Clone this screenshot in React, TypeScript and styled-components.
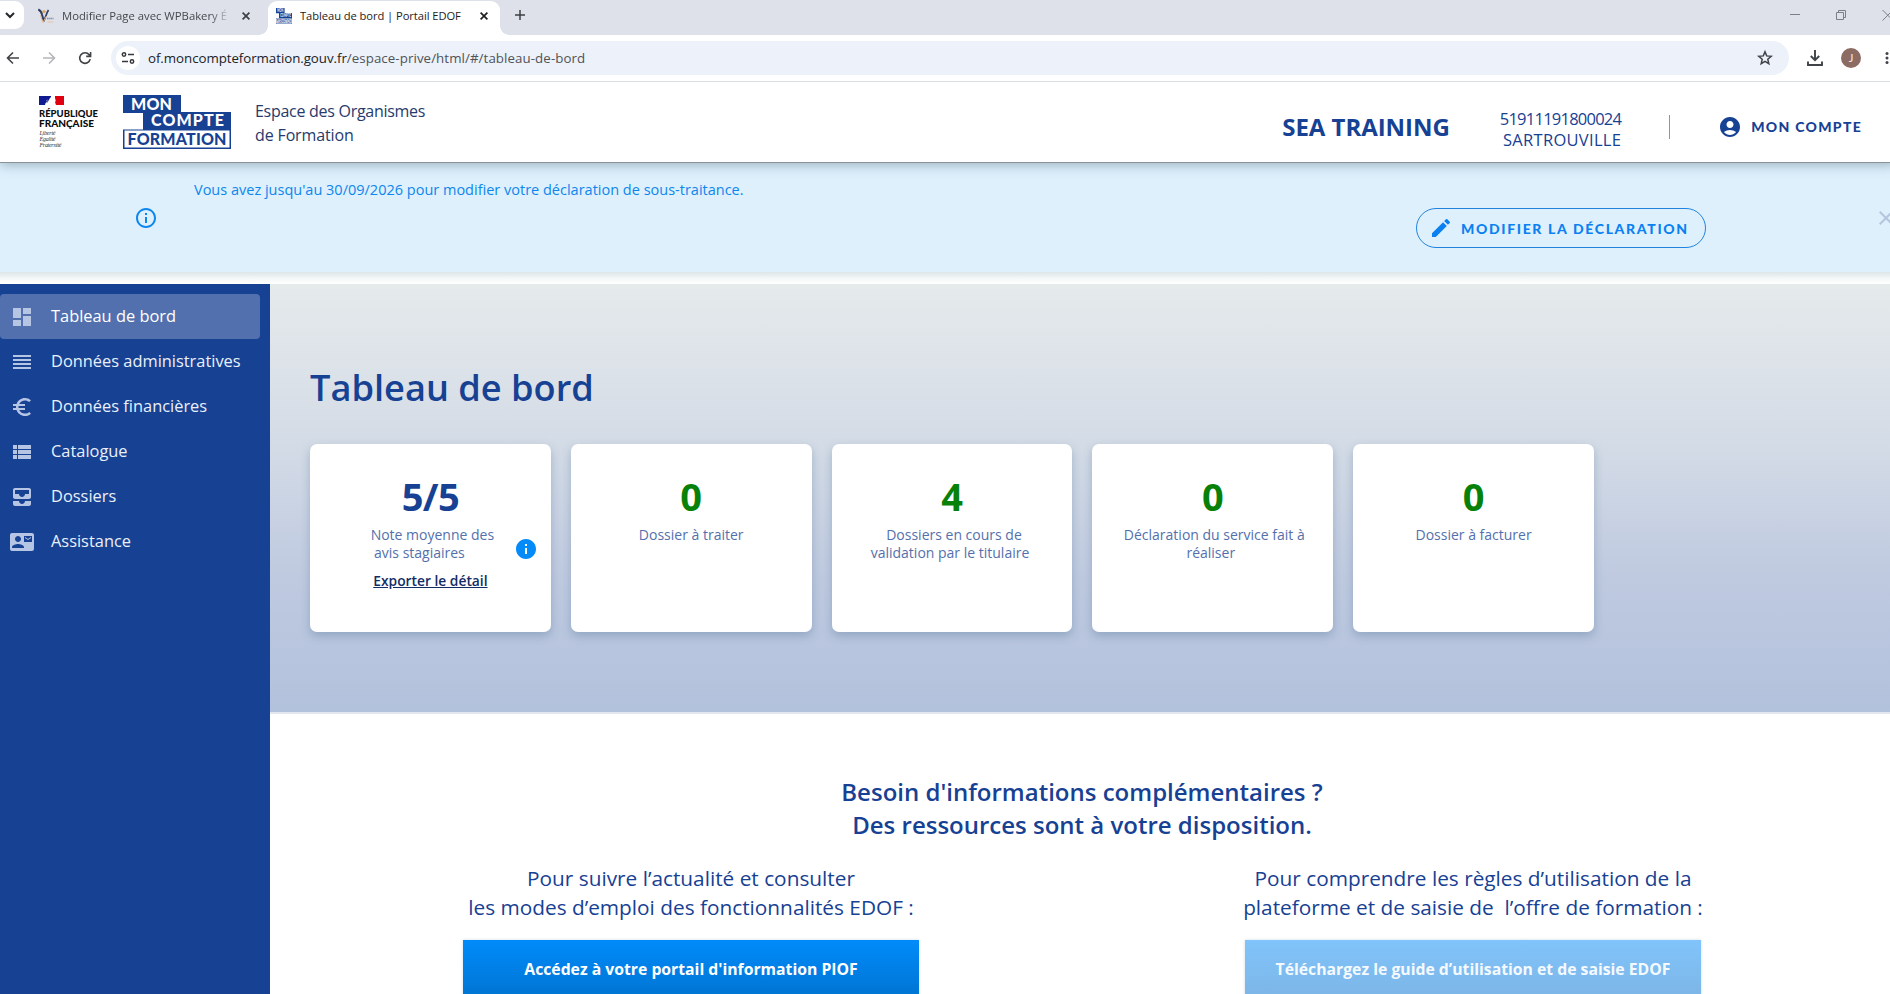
import React from "react";
import styled, { createGlobalStyle } from "styled-components";
import {
  MdAccountCircle,
  MdAllInbox,
  MdClose,
  MdContactMail,
  MdDashboard,
  MdEdit,
  MdEuroSymbol,
  MdInfo,
  MdInfoOutline,
  MdReorder,
  MdViewList,
} from "react-icons/md";

const navy = "#174193";
const azure = "#0d86ee";

const GlobalStyle = createGlobalStyle`
  html, body { margin: 0; padding: 0; background: #fff; overflow: hidden; }
  *, *::before, *::after { box-sizing: border-box; }
`;

const Viewport = styled.div`
  width: 100vw;
  height: 100vh;
  overflow: hidden;
  font-family: "Open Sans", "Noto Sans", sans-serif;
  color: ${navy};
`;

const Page = styled.div`
  width: 1896px;
  height: 994px;
  display: flex;
  flex-direction: column;
  overflow: hidden;
`;

/* ---------- browser chrome ---------- */

const TabStrip = styled.div`
  height: 35px;
  flex: none;
  display: flex;
  background: #dee1e9;
`;

const TabSearch = styled.div`
  width: 24px;
  height: 28px;
  margin-top: 1px;
  padding-left: 4px;
  display: flex;
  align-items: center;
  background: #fff;
  border-radius: 0 9px 9px 0;
`;

const Tab = styled.div<{ $active?: boolean }>`
  position: relative;
  width: ${(p) => (p.$active ? 232 : 244)}px;
  height: ${(p) => (p.$active ? 34 : 30)}px;
  margin-top: 1px;
  padding: ${(p) => (p.$active ? "0 12px 5px 8px" : "0 18px 1px 14px")};
  display: flex;
  align-items: center;
  gap: 8px;
  background: ${(p) => (p.$active ? "#fff" : "transparent")};
  border-radius: 9px 9px 0 0;
  color: ${(p) => (p.$active ? "#1f2023" : "#45484d")};
  font-size: ${(p) => (p.$active ? 11.2 : 11.3)}px;
  letter-spacing: ${(p) => (p.$active ? "-0.07px" : "0")};
  white-space: nowrap;

  &::before,
  &::after {
    content: "";
    display: ${(p) => (p.$active ? "block" : "none")};
    position: absolute;
    bottom: 0;
    width: 9px;
    height: 9px;
  }
  &::before {
    left: -9px;
    background: radial-gradient(circle at 0 0, transparent 8.5px, #fff 9px);
  }
  &::after {
    right: -9px;
    background: radial-gradient(circle at 100% 0, transparent 8.5px, #fff 9px);
  }
`;

const TabTitle = styled.span<{ $fade?: boolean }>`
  width: 168px;
  overflow: hidden;
  ${(p) => p.$fade && "mask-image: linear-gradient(90deg, #000 88%, transparent 101%);"}
`;

const TabClose = styled.span`
  display: flex;
  margin-left: auto;
`;

const NewTab = styled.div`
  width: 40px;
  height: 29px;
  display: flex;
  align-items: center;
  justify-content: center;
`;

const WindowControls = styled.div`
  margin-left: auto;
  height: 30px;
  padding-right: 2px;
  display: flex;
  align-items: center;
  gap: 36px;
`;

const Toolbar = styled.div`
  height: 47px;
  flex: none;
  display: flex;
  align-items: center;
  border-bottom: 1px solid #dadde2;
  background: #fff;
`;

const NavButtons = styled.div`
  width: 111px;
  padding-left: 5px;
  display: flex;
  gap: 20px;
`;

const Omnibox = styled.div`
  width: 1678px;
  height: 34px;
  padding: 0 15px 0 5px;
  display: flex;
  align-items: center;
  border-radius: 17px;
  background: #ecf1fa;
  font-size: 13.3px;
  line-height: 20px;
  color: #505357;
  white-space: nowrap;
`;

const SiteInfo = styled.span`
  width: 24px;
  height: 24px;
  margin-right: 8px;
  display: flex;
  align-items: center;
  justify-content: center;
  border-radius: 50%;
  background: #fff;
`;

const Host = styled.span`
  color: #202226;
  letter-spacing: -0.05px;
`;

const UrlPath = styled.span`
  letter-spacing: 0.08px;
`;

const StarSlot = styled.span`
  display: flex;
  margin-left: auto;
`;

const ToolbarActions = styled.div`
  flex: 1;
  padding-left: 17px;
  display: flex;
  align-items: center;
`;

const Avatar = styled.div`
  width: 20px;
  height: 20px;
  margin: 0 24px 0 17px;
  border-radius: 50%;
  background: #8c6c62;
  color: #f3e9e6;
  font-family: Lato, sans-serif;
  font-size: 11px;
  line-height: 20px;
  text-align: center;
`;

/* ---------- site header ---------- */

const Header = styled.header`
  position: relative;
  z-index: 1;
  height: 81px;
  flex: none;
  padding: 0 34px 0 38px;
  display: flex;
  align-items: center;
  background: #fff;
  border-bottom: 1px solid #8a9299;
  box-shadow: 0 1px 12px rgba(40, 70, 90, 0.42);
  clip-path: inset(0 0 -20px 0);
`;

const Logos = styled.div`
  display: flex;
  gap: 21px;
  margin-right: 24px;
`;

const SpaceName = styled.div`
  padding-top: 2px;
  font-size: 16px;
  line-height: 24px;
  color: #273a6c;
`;

const SpaceLine = styled.div<{ $spacing: number }>`
  letter-spacing: ${(p) => p.$spacing}px;
`;

const AccountArea = styled.div`
  margin: 9px 0 0 auto;
  display: flex;
  align-items: center;
`;

const Company = styled.div`
  font-size: 24px;
  font-weight: 700;
  letter-spacing: -0.05px;
`;

const Siret = styled.div`
  margin: 5px 48px 0 50px;
  font-size: 16.5px;
  line-height: 21px;
  text-align: right;
`;

const SiretNumber = styled.div`
  letter-spacing: -0.76px;
`;

const SiretCity = styled.div`
  letter-spacing: 0.3px;
`;

const Divider = styled.div`
  width: 1px;
  height: 24px;
  margin-right: 48px;
  background: #8b95ad;
`;

const AccountLink = styled.div`
  display: flex;
  align-items: center;
  gap: 9px;
  font-family: Lato, sans-serif;
  font-size: 14px;
  font-weight: 900;
  letter-spacing: 1.3px;
`;

/* ---------- notice ---------- */

const Notice = styled.div`
  height: 109px;
  flex: none;
  display: flex;
  background: #def0fc;
  color: ${azure};
`;

const NoticeIcon = styled.div`
  padding: 43px 36px 0 134px;
  line-height: 0;
`;

const NoticeText = styled.div`
  padding-top: 16px;
  font-size: 14.5px;
  line-height: 21px;
`;

const NoticeButton = styled.button`
  width: 290px;
  height: 40px;
  margin: 45px 168px 0 auto;
  padding: 0 0 0 12px;
  display: flex;
  align-items: center;
  gap: 8px;
  border: 1px solid #2183de;
  border-radius: 20px;
  background: transparent;
  color: #0a80f2;
  font-family: Lato, sans-serif;
  font-size: 14px;
  font-weight: 900;
  letter-spacing: 1.65px;
  white-space: nowrap;
`;

const NoticeClose = styled.div`
  width: 22px;
  padding-top: 43px;
  line-height: 0;
  color: #b4c6de;
`;

const NoticeShade = styled.div`
  height: 12px;
  flex: none;
  background: linear-gradient(#dde6e7, #f6f9f9 60%, #fff);
`;

/* ---------- body ---------- */

const Body = styled.div`
  flex: 1;
  min-height: 0;
  display: flex;
`;

const Sidebar = styled.nav`
  width: 270px;
  flex: none;
  padding: 10px 10px 0 0;
  background: ${navy};
`;

const NavItem = styled.a<{ $active?: boolean }>`
  height: 45px;
  padding-left: 10px;
  display: flex;
  align-items: center;
  gap: 17px;
  border-radius: 4px;
  background: ${(p) => (p.$active ? "#5270ae" : "transparent")};
  color: ${(p) => (p.$active ? "#fff" : "#eaf0fa")};
  font-size: 16.4px;

  svg {
    color: #b6c5e3;
  }
`;

const NavLabel = styled.span`
  padding-bottom: 3px;
`;

const Main = styled.main`
  flex: 1;
  min-width: 0;
`;

const Hero = styled.section`
  height: 430px;
  padding: 79px 40px 0;
  background: linear-gradient(#e5eaeb, #d3dbe6 38%, #bfcae0 68%, #b2c1dc);
  border-bottom: 2px solid #e3e8f0;
`;

const Title = styled.h1`
  margin: 0 0 33px;
  font-size: 36.2px;
  line-height: 48px;
  font-weight: 600;
`;

const Cards = styled.div`
  width: 1284px;
  display: grid;
  grid-template-columns: repeat(5, 1fr);
  gap: 20px;
`;

const Card = styled.article`
  position: relative;
  height: 188px;
  padding-top: 28px;
  border-radius: 7px;
  background: #fff;
  box-shadow: 0 4px 10px rgba(70, 105, 140, 0.34);
  text-align: center;
`;

const Figure = styled.div<{ $plain?: boolean }>`
  margin-bottom: 6px;
  font-size: 38px;
  line-height: 48px;
  font-weight: 700;
  letter-spacing: ${(p) => (p.$plain ? "-0.6px" : "0")};
  color: ${(p) => (p.$plain ? navy : "#078107")};
`;

const CardLine = styled.div<{ $shift?: number }>`
  padding-left: ${(p) => Math.max(0, p.$shift ?? 0)}px;
  padding-right: ${(p) => Math.max(0, -(p.$shift ?? 0))}px;
  font-size: 14px;
  line-height: 18px;
  color: #5470ac;
`;

const ExportLink = styled.a`
  display: block;
  margin-top: 10px;
  font-size: 13.8px;
  line-height: 18px;
  font-weight: 600;
  color: #122c66;
  text-decoration: underline;
  text-underline-offset: 1px;
`;

const InfoBadge = styled.span`
  position: absolute;
  right: 13px;
  top: 93px;
  line-height: 0;
  color: #048bf8;
`;

const Resources = styled.section`
  width: 1564px;
  margin: 61px 0 0 30px;
`;

const ResourcesTitle = styled.h2`
  margin: 0 0 23px;
  font-size: 24px;
  line-height: 33px;
  font-weight: 600;
  text-align: center;
`;

const Columns = styled.div`
  display: grid;
  grid-template-columns: 1fr 1fr;
`;

const Column = styled.div`
  display: flex;
  flex-direction: column;
  align-items: center;
  gap: 18px;
`;

const Pitch = styled.p`
  margin: 0;
  font-size: 20.8px;
  line-height: 29px;
  text-align: center;
  white-space: pre;
`;

const ResourceButton = styled.button<{ $muted?: boolean }>`
  width: 456px;
  height: 58px;
  padding: 0;
  border: 0;
  background: ${(p) =>
    p.$muted ? "linear-gradient(#80c4fb, #7db5e6)" : "linear-gradient(#018bfa, #0074d2)"};
  box-shadow: 0 0 3px rgba(0, 80, 130, 0.2);
  color: ${(p) => (p.$muted ? "#f4faff" : "#fff")};
  font-family: inherit;
  font-size: 15.75px;
  font-weight: 700;
`;

/* ---------- drawings ---------- */

const CloseGlyph = ({ color = "#3c4043" }: { color?: string }) => (
  <svg width="8" height="8" viewBox="0 0 8 8" stroke={color} strokeWidth="1.7">
    <path d="M0.6 0.6 7.4 7.4M7.4 0.6 0.6 7.4" />
  </svg>
);

const PersonFavicon = () => (
  <svg width="16" height="16" viewBox="0 0 16 16" fill="none">
    <path d="M0.3 1.5c2 1 3.2 2.5 3.7 5L5.5 12" stroke="#2f3f66" strokeWidth="2" />
    <path d="M10.5 2C8.5 5 8 8.5 5.5 13.5" stroke="#2f3f66" strokeWidth="1.7" />
    <circle cx="6" cy="3.6" r="1.7" fill="#e0a46a" />
    <path d="M2.5 7.5 5 14.5 8.5 8" stroke="#e3b286" strokeWidth="1" />
    <path d="M9 10.5h6.5" stroke="#8b93a8" strokeWidth="1.6" strokeDasharray="1.6 .4" />
    <path d="M9.5 14h6" stroke="#e6c3a4" strokeWidth="1" />
  </svg>
);

const BrandBlocks = ({ width, height }: { width: number; height: number }) => (
  <svg width={width} height={height} viewBox="0 0 108 54" preserveAspectRatio="none">
    <path d="M0 0h58v17h50v37H0V34.5h20V18H0z" fill={navy} />
    <path d="M1.5 35.5h105v17H1.5z" fill="#fff" />
    <g fontFamily="Lato, sans-serif" fontWeight="900" fontSize="16" fill="#fff">
      <text x="8" y="15" textLength="41">MON</text>
      <text x="28" y="31.2" textLength="73">COMPTE</text>
      <text x="4.5" y="49.8" textLength="99" fill={navy}>FORMATION</text>
    </g>
  </svg>
);

const RepublicLogo = () => (
  <svg width="64" height="54" viewBox="0 0 64 54">
    <path d="M1 1h12v9H1z" fill="#101a91" />
    <path d="M13 1h4v9h-4z" fill="#fff" />
    <path d="M17 1h9v9h-9z" fill="#e1000f" />
    <path d="M7 10c.5-3 2-3 3-3.5L12 3c1-1.5 3-2 4.5-1 .9 1.2.6 2.2 1.2 3.4.2 1-.9 1.1-.5 2.4L18 10z" fill="#fff" />
    <path d="M8 5.5l2-.5M8 7l2 .3" stroke="#7f86c9" strokeWidth=".8" />
    <g fontFamily="Lato, sans-serif" fontWeight="900" fontSize="9.8" fill="#0c0c0c">
      <text x="1" y="21.5" textLength="59" lengthAdjust="spacingAndGlyphs">RÉPUBLIQUE</text>
      <text x="1" y="31.5" textLength="55" lengthAdjust="spacingAndGlyphs">FRANÇAISE</text>
    </g>
    <g fontFamily="'Liberation Serif', serif" fontStyle="italic" fontSize="6" fill="#333">
      <text x="1.5" y="40" textLength="16">Liberté</text>
      <text x="1.5" y="46.2" textLength="16">Égalité</text>
      <text x="1.5" y="52.2" textLength="22">Fraternité</text>
    </g>
  </svg>
);

const BackArrow = ({ muted }: { muted?: boolean }) => (
  <svg width="16" height="16" viewBox="0 0 16 16" fill="none" stroke={muted ? "#b4b6b9" : "#414447"} strokeWidth="1.6"
    transform={muted ? "scale(-1 1)" : undefined}>
    <path d="M14 8H2.8M8 2.5 2.5 8 8 13.5" />
  </svg>
);

const navItems = [
  { label: "Tableau de bord", Icon: MdDashboard },
  { label: "Données administratives", Icon: MdReorder },
  { label: "Données financières", Icon: MdEuroSymbol },
  { label: "Catalogue", Icon: MdViewList },
  { label: "Dossiers", Icon: MdAllInbox },
  { label: "Assistance", Icon: MdContactMail },
];

const counters = [
  { value: "0", lines: [{ text: "Dossier à traiter", shift: 0 }] },
  {
    value: "4",
    lines: [
      { text: "Dossiers en cours de", shift: 4 },
      { text: "validation par le titulaire", shift: -4 },
    ],
  },
  {
    value: "0",
    lines: [
      { text: "Déclaration du service fait à", shift: 3 },
      { text: "réaliser", shift: -4 },
    ],
  },
  { value: "0", lines: [{ text: "Dossier à facturer", shift: 0 }] },
];

export default function App() {
  return (
    <Viewport>
      <GlobalStyle />
      <Page>
        <TabStrip>
          <TabSearch>
            <svg width="12" height="12" viewBox="0 0 12 12" fill="none" stroke="#25282b" strokeWidth="2">
              <path d="M2 4l4 4 4-4" />
            </svg>
          </TabSearch>
          <Tab>
            <PersonFavicon />
            <TabTitle $fade>Modifier Page avec WPBakery É</TabTitle>
            <TabClose><CloseGlyph /></TabClose>
          </Tab>
          <Tab $active>
            <BrandBlocks width={16} height={16} />
            <TabTitle>Tableau de bord | Portail EDOF</TabTitle>
            <TabClose><CloseGlyph color="#1f2023" /></TabClose>
          </Tab>
          <NewTab>
            <svg width="10" height="10" viewBox="0 0 10 10" stroke="#3c4043" strokeWidth="1.5">
              <path d="M5 0v10M0 5h10" />
            </svg>
          </NewTab>
          <WindowControls>
            <svg width="10" height="10" viewBox="0 0 10 10" stroke="#7c7f85">
              <path d="M0 4.5h10" />
            </svg>
            <svg width="10" height="10" viewBox="0 0 10 10" fill="none" stroke="#7c7f85">
              <path d="M.5 2.5h7v7h-7zM2.5 2.5v-2h7v7h-2" />
            </svg>
            <svg width="12" height="12" viewBox="0 0 12 12" stroke="#7c7f85">
              <path d="M.5 1l10.5 10.5M11 1 .5 11.5" />
            </svg>
          </WindowControls>
        </TabStrip>

        <Toolbar>
          <NavButtons>
            <BackArrow />
            <BackArrow muted />
            <svg width="16" height="16" viewBox="0 0 16 16" fill="none" stroke="#414447" strokeWidth="1.6">
              <path d="M13.2 9.2A5.3 5.3 0 1 1 12.2 4.8L13.5 6.2M13.6 2v4.4H9.2" />
            </svg>
          </NavButtons>
          <Omnibox>
            <SiteInfo>
              <svg width="14" height="14" viewBox="0 0 14 14" fill="none" stroke="#35383c" strokeWidth="1.5">
                <circle cx="3" cy="3.5" r="1.7" />
                <path d="M7 3.5h6M1 10.5h6" />
                <circle cx="11" cy="10.5" r="1.7" />
              </svg>
            </SiteInfo>
            <Host>of.moncompteformation.gouv.fr</Host>
            <UrlPath>/espace-prive/html/#/tableau-de-bord</UrlPath>
            <StarSlot>
              <svg width="18" height="18" viewBox="0 0 18 18" fill="none" stroke="#404347" strokeWidth="1.5">
                <path d="M9 2.8l1.7 4.1 4.5.4-3.4 2.9 1 4.4L9 12.3l-3.8 2.3 1-4.4-3.4-2.9 4.5-.4z" />
              </svg>
            </StarSlot>
          </Omnibox>
          <ToolbarActions>
            <svg width="18" height="18" viewBox="0 0 18 18" fill="none" stroke="#404347" strokeWidth="1.9">
              <path d="M9 1v10M4.8 7 9 11.2 13.2 7M2 12.5v3.5h14v-3.5" />
            </svg>
            <Avatar>J</Avatar>
            <svg width="4" height="14" viewBox="0 0 4 14" fill="#404347">
              <circle cx="2" cy="2.5" r="1.5" />
              <circle cx="2" cy="7" r="1.5" />
              <circle cx="2" cy="11.5" r="1.5" />
            </svg>
          </ToolbarActions>
        </Toolbar>

        <Header>
          <Logos>
            <RepublicLogo />
            <BrandBlocks width={108} height={54} />
          </Logos>
          <SpaceName>
            <SpaceLine $spacing={-0.28}>Espace des Organismes</SpaceLine>
            <SpaceLine $spacing={-0.14}>de Formation</SpaceLine>
          </SpaceName>
          <AccountArea>
            <Company>SEA TRAINING</Company>
            <Siret>
              <SiretNumber>51911191800024</SiretNumber>
              <SiretCity>SARTROUVILLE</SiretCity>
            </Siret>
            <Divider />
            <AccountLink>
              <MdAccountCircle size={24} />
              MON COMPTE
            </AccountLink>
          </AccountArea>
        </Header>

        <Notice>
          <NoticeIcon><MdInfoOutline size={24} /></NoticeIcon>
          <NoticeText>
            Vous avez jusqu'au 30/09/2026 pour modifier votre déclaration de sous-traitance.
          </NoticeText>
          <NoticeButton>
            <MdEdit size={24} />
            MODIFIER LA DÉCLARATION
          </NoticeButton>
          <NoticeClose><MdClose size={24} /></NoticeClose>
        </Notice>
        <NoticeShade />

        <Body>
          <Sidebar>
            {navItems.map(({ label, Icon }, i) => (
              <NavItem key={label} $active={i === 0}>
                <Icon size={24} />
                <NavLabel>{label}</NavLabel>
              </NavItem>
            ))}
          </Sidebar>
          <Main>
            <Hero>
              <Title>Tableau de bord</Title>
              <Cards>
                <Card>
                  <Figure $plain>5/5</Figure>
                  <CardLine $shift={4}>Note moyenne des</CardLine>
                  <CardLine $shift={-22}>avis stagiaires</CardLine>
                  <ExportLink>Exporter le détail</ExportLink>
                  <InfoBadge><MdInfo size={24} /></InfoBadge>
                </Card>
                {counters.map((c, i) => (
                  <Card key={i}>
                    <Figure>{c.value}</Figure>
                    {c.lines.map((l) => (
                      <CardLine key={l.text} $shift={l.shift}>{l.text}</CardLine>
                    ))}
                  </Card>
                ))}
              </Cards>
            </Hero>
            <Resources>
              <ResourcesTitle>
                Besoin d'informations complémentaires ?
                <br />
                Des ressources sont à votre disposition.
              </ResourcesTitle>
              <Columns>
                <Column>
                  <Pitch>{"Pour suivre l’actualité et consulter\nles modes d’emploi des fonctionnalités EDOF :"}</Pitch>
                  <ResourceButton>Accédez à votre portail d'information PIOF</ResourceButton>
                </Column>
                <Column>
                  <Pitch>{"Pour comprendre les règles d’utilisation de la\nplateforme et de saisie de  l’offre de formation :"}</Pitch>
                  <ResourceButton $muted>Téléchargez le guide d’utilisation et de saisie EDOF</ResourceButton>
                </Column>
              </Columns>
            </Resources>
          </Main>
        </Body>
      </Page>
    </Viewport>
  );
}
